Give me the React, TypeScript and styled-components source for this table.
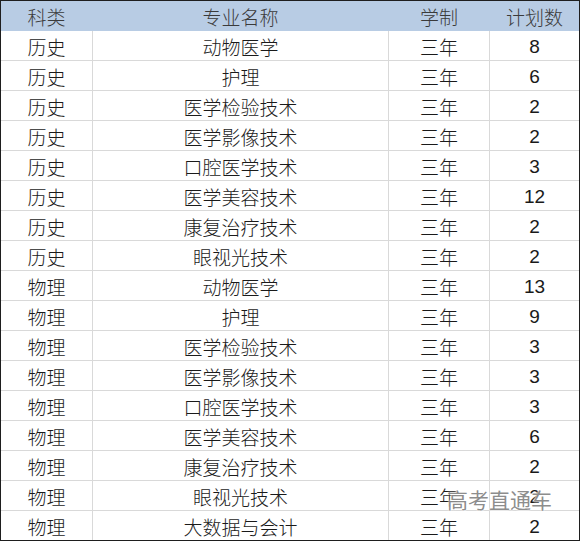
import styled, { createGlobalStyle } from "styled-components";

const GlobalStyle = createGlobalStyle`
  html, body { margin: 0; padding: 0; background: #ffffff; }
  body { font-family: "Noto Sans CJK SC", "Liberation Sans", sans-serif; }
`;

const rows = [
  ["历史", "动物医学", "三年", "8"],
  ["历史", "护理", "三年", "6"],
  ["历史", "医学检验技术", "三年", "2"],
  ["历史", "医学影像技术", "三年", "2"],
  ["历史", "口腔医学技术", "三年", "3"],
  ["历史", "医学美容技术", "三年", "12"],
  ["历史", "康复治疗技术", "三年", "2"],
  ["历史", "眼视光技术", "三年", "2"],
  ["物理", "动物医学", "三年", "13"],
  ["物理", "护理", "三年", "9"],
  ["物理", "医学检验技术", "三年", "3"],
  ["物理", "医学影像技术", "三年", "3"],
  ["物理", "口腔医学技术", "三年", "3"],
  ["物理", "医学美容技术", "三年", "6"],
  ["物理", "康复治疗技术", "三年", "2"],
  ["物理", "眼视光技术", "三年", "2"],
  ["物理", "大数据与会计", "三年", "2"],
];

const Sheet = styled.div`
  position: relative;
  width: 578px;
  height: 539px;
  border: 1px solid #1e1e1e;
  overflow: hidden;
`;

const Row = styled.div<{ $head?: boolean }>`
  display: grid;
  grid-template-columns: 92px 296px 101px 1fr;
  height: 30px;
  box-sizing: border-box;
  border-bottom: 1px solid ${(p) => (p.$head ? "#b8cce4" : "#d9d9d9")};
  background: ${(p) => (p.$head ? "#b8cce4" : "#ffffff")};
  &:last-child { border-bottom: none; }
`;

const Cell = styled.div<{ $head?: boolean; $num?: boolean }>`
  display: flex;
  align-items: center;
  justify-content: center;
  padding-top: ${(p) => (p.$num ? "3px" : "1px")};
  box-sizing: border-box;
  font-size: ${(p) => (p.$num ? "19px" : "19px")};
  color: ${(p) => (p.$head ? "#3a3a3a" : "#1a1a1a")};
  font-family: ${(p) =>
    p.$num
      ? '"Liberation Sans", "Noto Sans CJK SC", sans-serif'
      : '"Noto Sans CJK SC", "Liberation Sans", sans-serif'};
  font-weight: 300;
  border-right: 1px solid ${(p) => (p.$head ? "#b8cce4" : "#d9d9d9")};
  &:last-child { border-right: none; }
`;

const Watermark = styled.div`
  position: absolute;
  left: 446px;
  top: 483px;
  font-size: 21px;
  font-family: "Noto Sans CJK SC", sans-serif;
  color: rgba(110, 110, 110, 0.8);
  text-shadow: 0 0 2px #ffffff, 0 0 2px #ffffff;
`;

export default function App() {
  return (
    <>
      <GlobalStyle />
      <Sheet>
        <Row $head>
          <Cell $head>科类</Cell>
          <Cell $head>专业名称</Cell>
          <Cell $head>学制</Cell>
          <Cell $head>计划数</Cell>
        </Row>
        {rows.map((r, i) => (
          <Row key={i}>
            <Cell>{r[0]}</Cell>
            <Cell>{r[1]}</Cell>
            <Cell>{r[2]}</Cell>
            <Cell $num>{r[3]}</Cell>
          </Row>
        ))}
        <Watermark>高考直通车</Watermark>
      </Sheet>
    </>
  );
}
